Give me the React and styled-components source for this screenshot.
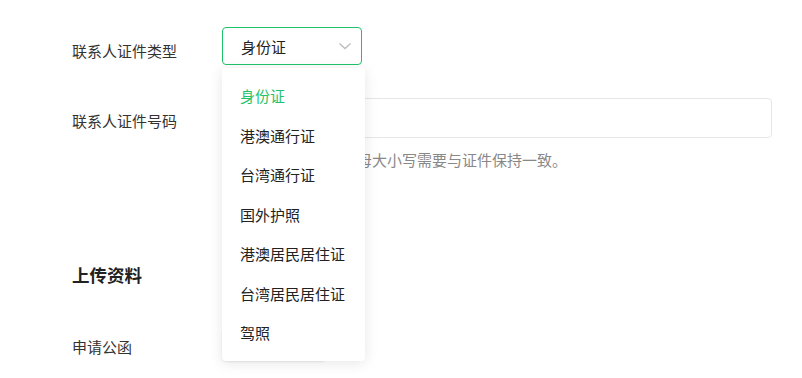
import React from 'react';
import styled, { createGlobalStyle } from 'styled-components';

const GlobalStyle = createGlobalStyle`
  body {
    margin: 0;
    background: #fff;
    font-family: "Noto Sans CJK SC", "Noto Sans", sans-serif;
    color: #333;
  }
`;

const Page = styled.div`
  width: 802px;
  height: 378px;
  overflow: hidden;
  padding: 27px 30px 0 72px;
  box-sizing: border-box;
`;

const FormRow = styled.div`
  display: flex;
  align-items: flex-start;
  margin-top: ${p => p.gap || 0}px;
`;

const Label = styled.div`
  width: 150px;
  flex-shrink: 0;
  font-size: 15px;
  line-height: 20px;
  color: #333;
  padding-top: ${p => p.offset}px;
`;

const Field = styled.div`
  position: relative;
  flex: 1;
`;

const SelectBox = styled.div`
  width: 140px;
  height: 38px;
  box-sizing: border-box;
  border: 1px solid #1fc36a;
  border-radius: 4px;
  display: flex;
  align-items: center;
  justify-content: space-between;
  padding: 0 8px 0 18px;
  font-size: 15px;
  color: #222;
`;

const Menu = styled.ul`
  position: absolute;
  z-index: 5;
  top: 41px;
  left: 0;
  width: 143px;
  margin: 0;
  padding: 8px 0;
  list-style: none;
  background: #fff;
  border-radius: 4px;
  box-shadow: 0 2px 14px rgba(0, 0, 0, 0.1);
`;

const MenuItem = styled.li`
  height: 39.5px;
  line-height: 39.5px;
  padding-left: 18px;
  font-size: 15px;
  color: ${p => (p.active ? '#1fc36a' : '#222')};
  white-space: nowrap;
`;

const TextInput = styled.div`
  height: 40px;
  box-sizing: border-box;
  border: 1px solid #e6e6e6;
  border-radius: 4px;
`;

const Hint = styled.div`
  margin-top: 12px;
  font-size: 15px;
  line-height: 20px;
  color: #888;
  white-space: nowrap;
`;

const SectionTitle = styled.h3`
  margin: 93px 0 0;
  font-size: 17.5px;
  line-height: 24px;
  font-weight: 700;
  color: #222;
`;

const UploadButton = styled.div`
  width: 104px;
  height: 32px;
  box-sizing: border-box;
  border: 1px solid #ddd;
  border-radius: 4px;
  box-shadow: 0 1px 2px rgba(0, 0, 0, 0.08);
`;

const Chevron = () => (
  <svg width="16" height="16" viewBox="0 0 16 16" fill="none">
    <path d="M2.5 5.5 L8 10.5 L13.5 5.5" stroke="#bbb" strokeWidth="1.3" />
  </svg>
);

const options = ['身份证', '港澳通行证', '台湾通行证', '国外护照', '港澳居民居住证', '台湾居民居住证', '驾照'];

export default function App() {
  return (
    <Page>
      <GlobalStyle />
      <FormRow>
        <Label offset={14}>联系人证件类型</Label>
        <Field>
          <SelectBox>
            身份证
            <Chevron />
          </SelectBox>
          <Menu>
            {options.map((o, i) => (
              <MenuItem key={o} active={i === 0}>
                {o}
              </MenuItem>
            ))}
          </Menu>
        </Field>
      </FormRow>
      <FormRow gap={33}>
        <Label offset={13}>联系人证件号码</Label>
        <Field>
          <TextInput />
          <Hint>证件号码如有英文字母大小写需要与证件保持一致。</Hint>
        </Field>
      </FormRow>
      <SectionTitle>上传资料</SectionTitle>
      <FormRow gap={42}>
        <Label offset={8}>申请公函</Label>
        <Field>
          <UploadButton />
        </Field>
      </FormRow>
    </Page>
  );
}
